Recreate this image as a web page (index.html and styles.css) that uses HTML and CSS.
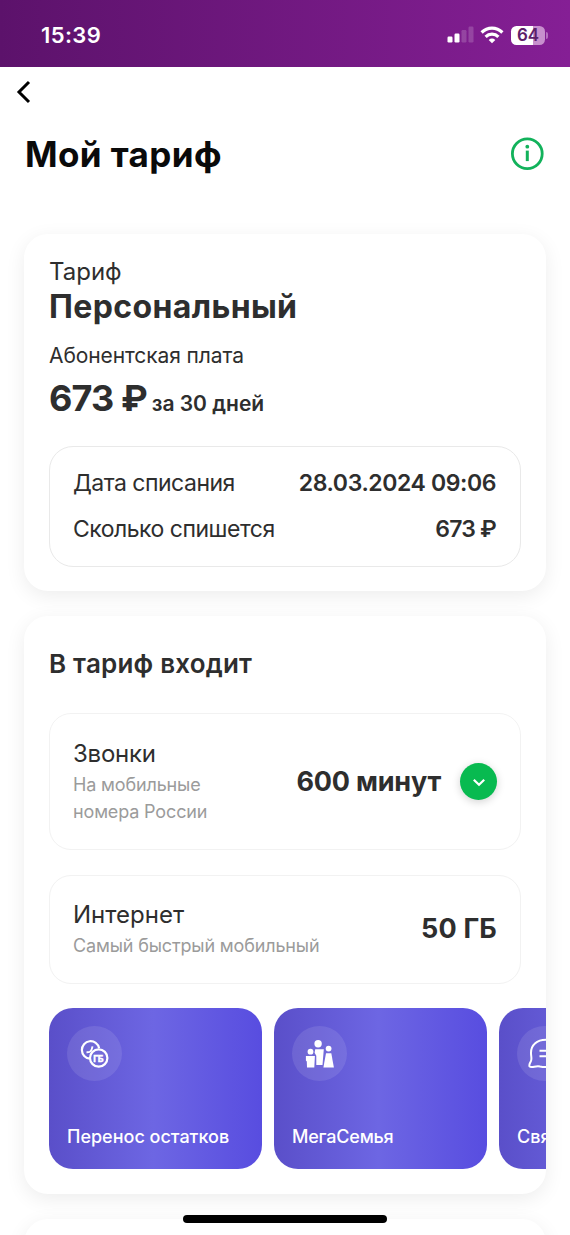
FILE: index.html
```html
<!DOCTYPE html>
<html lang="ru">
<head>
<meta charset="utf-8">
<title>Мой тариф</title>
<link rel="stylesheet" href="styles.css">
</head>
<body>
<div class="screen">
  <header class="status">
    <span class="clock">15:39</span>
    <div class="indicators">
      <svg class="signal" width="27" height="17" viewBox="0 0 27 17" fill="#fff">
        <rect x="0.5" y="10.5" width="5" height="6" rx="1.2"/>
        <rect x="7.5" y="7.5" width="5" height="9" rx="1.2"/>
        <rect x="14.5" y="4" width="5" height="12.500" rx="1.2" opacity=".18"/>
        <rect x="21.500" y="0.500" width="5" height="16" rx="1.2" opacity=".18"/>
      </svg>
      <svg class="wifi" width="24" height="18" viewBox="0 0 24 18" fill="none" stroke="#fff" stroke-width="3.2">
        <path d="M1.600 6.500C7.500 .7 16.500 .7 22.400 6.500"/>
        <path d="M5.600 10.800C9.200 7.300 14.800 7.300 18.400 10.800"/>
        <path d="M12 17.300 8.700 13.900Q12 11.300 15.300 13.900Z" fill="#fff" stroke="none"/>
      </svg>
      <div class="battery"><span class="battery-body">64</span><span class="battery-cap"></span></div>
    </div>
  </header>

  <nav class="nav">
    <svg width="16" height="24" viewBox="0 0 16 24" fill="none" stroke="#000" stroke-width="3">
      <path d="M14 2 4 12 14 22"/>
    </svg>
  </nav>

  <div class="heading">
    <h1 class="title">Мой тариф</h1>
    <svg class="info" width="34" height="34" viewBox="0 0 34 34" fill="none" stroke="#12b25b">
      <circle cx="17.300" cy="16.700" r="14.900" stroke-width="2.800"/>
      <circle cx="17.300" cy="9.700" r="1.900" fill="#12b25b" stroke="none"/>
      <path d="M17.300 13.600v10.500" stroke-width="3"/>
    </svg>
  </div>

  <main class="cards">
    <section class="card plan">
      <div class="plan-label">Тариф</div>
      <div class="plan-name">Персональный</div>
      <div class="fee-label">Абонентская плата</div>
      <div class="fee"><span class="fee-sum">673 ₽</span><span class="fee-period">за 30 дней</span></div>
      <div class="charge">
        <div class="charge-row"><span>Дата списания</span><b class="charge-time">28.03.2024 09:06</b></div>
        <div class="charge-row"><span>Сколько спишется</span><b class="charge-sum">673 ₽</b></div>
      </div>
    </section>

    <section class="card included">
      <h2 class="included-title">В тариф входит</h2>
      <div class="option calls">
        <div>
          <div class="option-name">Звонки</div>
          <div class="option-note">На мобильные<br>номера России</div>
        </div>
        <div class="option-side">
          <span class="option-value minutes">600 минут</span>
          <span class="expand">
            <svg width="14" height="10" viewBox="0 0 14 10" fill="none" stroke="#fff" stroke-width="2.200"><path d="M1.800 2.700 7 7.800 12.200 2.700"/></svg>
          </span>
        </div>
      </div>
      <div class="option internet">
        <div>
          <div class="option-name net">Интернет</div>
          <div class="option-note">Самый быстрый мобильный</div>
        </div>
        <span class="option-value gb">50 ГБ</span>
      </div>
      <div class="tiles">
        <div class="tile">
          <span class="tile-icon">
            <svg width="30" height="30" viewBox="0 0 30 30" fill="none" stroke="#fff" stroke-width="2.200">
              <path d="M9.900 19.600A8.700 8.700 0 1 1 19.100 9.200"/>
              <path d="M6.500 13.200q3.200 .2 4.300-1.200t1.700-4.600" stroke-width="1.900"/>
              <circle cx="18.700" cy="19" r="8.700"/>
              <text class="coin-text" x="13.200" y="22.500" fill="#fff" stroke="#fff" stroke-width=".3">ГБ</text>
            </svg>
          </span>
          <span class="tile-label rest">Перенос остатков</span>
        </div>
        <div class="tile">
          <span class="tile-icon">
            <svg width="30" height="30" viewBox="0 0 30 30" fill="#fff">
              <circle cx="13.100" cy="4.800" r="3.700"/>
              <circle cx="5.500" cy="12.700" r="2.900"/>
              <circle cx="23.600" cy="9.600" r="2.900"/>
              <path d="M.9 16.900H9.900L9.300 28.500H2L1.800 22.500 .9 21.500Z"/>
              <path d="M10.200 10.200H18.800L17.500 26H11.300V16.800L9.600 13.800Z"/>
              <path d="M21 14.200H26.300L28.900 28.500H18.400Z"/>
            </svg>
          </span>
          <span class="tile-label family">МегаСемья</span>
        </div>
        <div class="tile">
          <span class="tile-icon">
            <svg width="34" height="32" viewBox="0 0 34 32" fill="none" stroke="#fff" stroke-width="2" stroke-linejoin="round">
              <path d="M18 1.800C8.500 1.800 3 7.500 3 14.700 3 19 4 20.500 3 23 2.200 25 .8 26.500 1.500 28.300 3.500 30.500 8 27.200 12 28.500 24 31 31.500 24 31.500 15.500 31.500 7.800 25.500 1.800 18 1.800Z"/>
              <path d="M11.500 12.800H25M11.500 18.300H22"/>
            </svg>
          </span>
          <span class="tile-label link">Связь</span>
        </div>
      </div>
    </section>

    <section class="card next"></section>
  </main>
  <div class="home-bar"></div>
</div>
</body>
</html>
```
FILE: styles.css
```css
* { box-sizing: border-box; }
body { margin: 0; background: #fff; }
.screen {
  position: relative;
  width: 570px;
  height: 1235px;
  overflow: hidden;
  font-family: Inter, "Noto Sans", sans-serif;
  color: #2e2e2e;
  white-space: nowrap;
}
.status {
  display: flex;
  justify-content: space-between;
  height: 67px;
  padding: 21px 22px 0 41px;
  background: linear-gradient(90deg, #5c126b, #851f95);
  color: #fff;
}
.clock { font-size: 22px; line-height: 28px; font-weight: 600; letter-spacing: .4px; }
.indicators { display: flex; align-items: flex-start; padding-top: 5px; }
.wifi { margin: 0 7px 0 6px; }
.battery { display: flex; align-items: center; gap: 1px; }
.battery-body {
  width: 34px;
  height: 19px;
  border-radius: 5.5px;
  background: linear-gradient(90deg, #fff 64%, #c78fcd 64%);
  color: #5d2069;
  font-size: 17px;
  line-height: 19px;
  font-weight: 600;
  text-align: center;
}
.battery-cap { width: 2px; height: 7px; border-radius: 0 2px 2px 0; background: #b66fc0; }
.nav { display: flex; height: 50px; padding: 13px 15px; }
.heading {
  display: flex;
  justify-content: space-between;
  height: 117px;
  padding: 15px 26px 0 25px;
}
.title { margin: 0; font-size: 35px; line-height: 44px; font-weight: 700; letter-spacing: .4px; color: #0a0a0a; }
.info { margin-top: 5px; }
.cards { display: flex; flex-direction: column; gap: 25px; padding: 0 24px; }
.card {
  flex: none;
  border-radius: 24px;
  background: #fff;
  box-shadow: 0 5px 20px rgba(0, 0, 0, .075);
}
.plan { height: 357px; padding: 23px 25px 0; }
.plan-label { font-size: 24px; line-height: 29px; }
.plan-name { margin-top: 1px; font-size: 32px; line-height: 40px; font-weight: 700; letter-spacing: .37px; }
.fee-label { margin-top: 14px; font-size: 21px; line-height: 29px; letter-spacing: -.1px; }
.fee { display: flex; align-items: baseline; gap: 5px; margin-top: 6px; height: 44px; line-height: 44px; }
.fee-sum { font-size: 36px; font-weight: 700; letter-spacing: -.9px; }
.fee-period { font-size: 21px; font-weight: 600; }
.charge {
  display: flex;
  flex-direction: column;
  gap: 18px;
  height: 121px;
  margin-top: 26px;
  padding: 22px 24px 0 23px;
  border: 1px solid #e9e9e9;
  border-radius: 24px;
}
.charge-row { display: flex; justify-content: space-between; font-size: 23px; line-height: 28px; letter-spacing: -.5px; }
.charge-row b { font-weight: 600; letter-spacing: -.4px; }
.charge-row .charge-sum { letter-spacing: -.8px; }
.included { height: 578px; padding: 27px 0 0 25px; overflow: hidden; }
.included-title { margin: 0; font-size: 26px; line-height: 42px; font-weight: 600; letter-spacing: .2px; }
.option {
  display: flex;
  justify-content: space-between;
  width: 472px;
  border: 1px solid #f2f2f2;
  border-radius: 22px;
  padding: 0 23px;
}
.calls { height: 137px; margin-top: 28px; padding-top: 25px; }
.internet { height: 109px; margin-top: 25px; padding-top: 24px; }
.option-name { font-size: 24px; line-height: 30px; letter-spacing: -.25px; }
.net { letter-spacing: 0; }
.option-note { font-size: 18px; line-height: 27px; margin-top: 2px; letter-spacing: -.15px; color: #9b9b9b; }
.option-side { display: flex; gap: 19px; height: 85px; align-items: center; }
.option-value { font-size: 27px; line-height: 36px; font-weight: 700; }
.minutes { letter-spacing: -.2px; }
.gb { margin-top: 11px; letter-spacing: .2px; }
.expand {
  display: flex;
  align-items: center;
  justify-content: center;
  width: 37px;
  height: 37px;
  border-radius: 50%;
  background: #08ba50;
  box-shadow: 0 2px 8px rgba(0, 0, 0, .18);
}
.tiles { display: flex; gap: 12px; margin-top: 24px; }
.tile {
  display: flex;
  flex: none;
  flex-direction: column;
  justify-content: space-between;
  width: 213px;
  height: 161px;
  padding: 18px 18px 19px;
  border-radius: 24px;
  background: linear-gradient(90deg, #5a4fc9, #6d66e3 49%, #584de0);
  color: #fff;
}
.tile-icon {
  display: flex;
  align-items: center;
  justify-content: center;
  width: 55px;
  height: 55px;
  border-radius: 50%;
  background: rgba(255, 255, 255, .1);
}
.tile-label { font-size: 18px; line-height: 26px; font-weight: 500; }
.family { letter-spacing: -.2px; }
.coin-text { font-size: 9px; font-weight: 800; letter-spacing: -.6px; }
.next { height: 60px; }
.home-bar {
  position: absolute;
  left: 183px;
  bottom: 12px;
  width: 204px;
  height: 8px;
  border-radius: 4px;
  background: #000;
}
```
